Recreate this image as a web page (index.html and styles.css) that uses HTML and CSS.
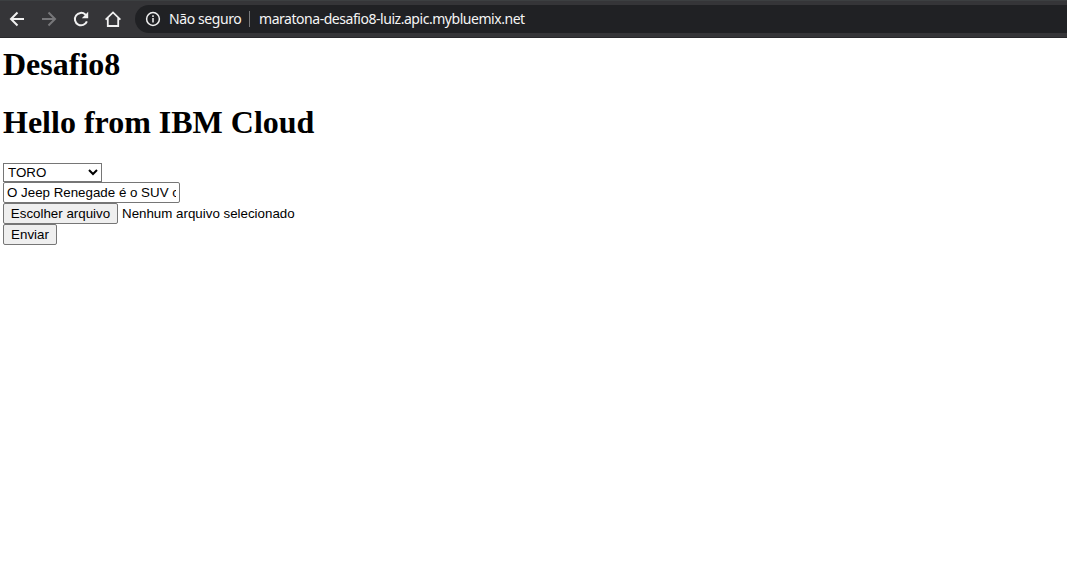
FILE: index.html
```html
<!DOCTYPE html>
<html lang="pt-BR">
<head>
<meta charset="utf-8">
<title>Desafio8</title>
<link rel="stylesheet" href="styles.css">
</head>
<body>
<header class="toolbar">
  <nav class="nav">
    <svg class="icon" viewBox="0 0 16 16"><path d="M15 8H2.500M8.500 1.500 2 8l6.500 6.500"/></svg>
    <svg class="icon icon-disabled" viewBox="0 0 16 16"><path d="M1 8h12.500M7.500 1.500 14 8l-6.500 6.500"/></svg>
    <svg class="icon" viewBox="0 0 16 16"><path d="M13.900 10.300A6.200 6.200 0 1 1 12.300 3.500L14 5.200"/><path class="solid" d="M15.200 .8v6.400H8.800z"/></svg>
    <svg class="icon icon-home" viewBox="0 0 16 16"><path d="M.6 8.700 8 1.400l7.400 7.300M2.800 7v8h10.400V7"/></svg>
  </nav>
  <div class="address">
    <svg class="icon icon-info" viewBox="0 0 16 16"><circle cx="8" cy="8" r="6.400"/><path d="M8 7v4.500M8 4.300V6"/></svg>
    <span class="security">Não seguro</span>
    <span class="divider"></span>
    <span class="url">maratona-desafio8-luiz.apic.mybluemix.net</span>
  </div>
</header>
<main class="page">
  <h1 class="title">Desafio8</h1>
  <h1 class="title">Hello from IBM Cloud</h1>
  <form class="form">
    <select class="control model"><option>TORO</option></select>
    <input class="control text" type="text" value="O Jeep Renegade é o SUV com">
    <div class="file">
      <button class="control button choose" type="button">Escolher arquivo</button>
      <span class="file-name">Nenhum arquivo selecionado</span>
    </div>
    <button class="control button send" type="button">Enviar</button>
  </form>
</main>
</body>
</html>
```
FILE: styles.css
```css
* { box-sizing: border-box; }
body { margin: 0; background: #fff; color: #000; overflow: hidden; }
.toolbar {
  display: flex;
  align-items: center;
  height: 38px;
  padding-left: 9px;
  background: #353538;
  border-bottom: 1px solid #28282b;
  border-top: 1px solid #3c3f41;
}
.nav { display: flex; gap: 16px; width: 126px; }
.icon { flex: none; width: 16px; height: 16px; fill: none; stroke: #f1f1f1; stroke-width: 2; }
.icon-disabled { stroke: #77777a; }
.icon .solid { fill: #f1f1f1; stroke: none; }
.icon-home { stroke-width: 1.8; }
.icon-info { stroke-width: 1.5; }
.address {
  display: flex;
  align-items: center;
  flex: 1;
  height: 28px;
  padding-left: 10px;
  border-radius: 14px 0 0 14px;
  background: #202124;
  color: #f5f5f5;
  font: 14px/20px "Noto Sans", "Open Sans", sans-serif;
  white-space: nowrap;
}
.security { width: 72px; margin-left: 8px; letter-spacing: -.4px; }
.divider { width: 1px; height: 16px; margin: 0 9px 0 8px; background: #77787a; }
.url { letter-spacing: -.46px; }
.page { padding: 8px 3px; }
.title { margin: 0 0 21px; font: bold 32px/37px "Liberation Serif", serif; }
.form { display: flex; flex-direction: column; align-items: flex-start; padding-top: 1px; }
.control, .file-name { margin: 0; font: 13.333px "Liberation Sans", Arial, sans-serif; }
.control { color: #000; border: 1px solid #767676; border-radius: 2px; background: #fff; }
.model { width: 99px; height: 19px; padding: 0; border-radius: 0; }
.text { width: 177px; height: 21px; padding: 1px 3px; }
.file { display: flex; align-items: center; gap: 4px; }
.button { height: 21px; padding: 0; background: #efefef; }
.choose { width: 115px; }
.send { width: 54px; }
```
